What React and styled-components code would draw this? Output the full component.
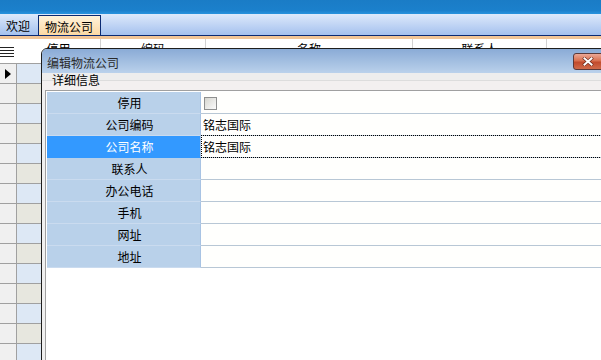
import React from 'react'
import styled, { createGlobalStyle } from 'styled-components';

const GlobalStyle = createGlobalStyle`
    html, body {
        margin: 0;
        padding: 0;
    }
    body {
        font-family: "Noto Sans CJK SC", "DejaVu Sans", sans-serif;
        font-size: 12px;
        color: #000;
        background: #fff;
        overflow: hidden;
    }
    * {
        box-sizing: border-box;
    }
`;

const columns = [
    { title: '停用', width: 84 },
    { title: '编码', width: 105 },
    { title: '名称', width: 207 },
    { title: '联系人', width: 134 },
    { title: '', width: 60 },
];

const fields = [
    { label: '停用', type: 'check' },
    { label: '公司编码', value: '铭志国际' },
    { label: '公司名称', value: '铭志国际', selected: true },
    { label: '联系人' },
    { label: '办公电话' },
    { label: '手机' },
    { label: '网址' },
    { label: '地址' },
];

function App() {
    const rows = Array.from({ length: 15 }, (_, i) => i);
    return (
        <Page>
            <GlobalStyle />
            <Banner />
            <TabStrip>
                <Tab $width={38}>欢迎</Tab>
                <Tab $width={63} $active>物流公司</Tab>
            </TabStrip>
            <PeachLine />
            <Grid>
                <HeaderRow>
                    <IndicatorHeader>
                        <svg width="14" height="12" viewBox="0 0 14 12">
                            <path d="M0 1.5h14M0 4.5h14M0 7.5h14M0 10.5h14" stroke="#222" strokeWidth="1" />
                        </svg>
                    </IndicatorHeader>
                    {columns.map((c, i) => (
                        <HeaderCell key={i} $width={c.width}>{c.title}</HeaderCell>
                    ))}
                </HeaderRow>
                {rows.map((r) => (
                    <BodyRow key={r}>
                        <IndicatorCell>
                            {r === 0 && (
                                <svg width="6" height="10" viewBox="0 0 6 10">
                                    <polygon points="0,0 6,5 0,10" fill="#000" />
                                </svg>
                            )}
                        </IndicatorCell>
                        {columns.map((c, i) => (
                            <DataCell key={i} $width={c.width} $odd={r % 2 === 1} />
                        ))}
                    </BodyRow>
                ))}
            </Grid>

            <Dialog>
                <TitleBar>
                    <Title>编辑物流公司</Title>
                    <CloseButton>
                        <svg width="12" height="9" viewBox="0 0 12 9">
                            <path d="M2.5 1.5L9.5 7.5M9.5 1.5L2.5 7.5" stroke="#6b2a1c" strokeWidth="3.2" strokeLinecap="square" />
                            <path d="M2.5 1.5L9.5 7.5M9.5 1.5L2.5 7.5" stroke="#fff" strokeWidth="2" strokeLinecap="square" />
                        </svg>
                    </CloseButton>
                </TitleBar>
                <SectionHeader>详细信息</SectionHeader>
                <Panel>
                    {fields.map((f, i) => (
                        <PropRow key={i}>
                            <PropLabel $selected={f.selected}>{f.label}</PropLabel>
                            <PropValue $focused={f.selected}>
                                {f.type === 'check' ? <CheckBox /> : f.value}
                            </PropValue>
                        </PropRow>
                    ))}
                </Panel>
            </Dialog>
        </Page>
    )
}

const Page = styled.div`
    position: relative;
    width: 601px;
    height: 360px;
    overflow: hidden;
`;

const Banner = styled.div`
    height: 14px;
    background: linear-gradient(#1a7cc6, #1b80cc 75%, #2893de);
`;

const TabStrip = styled.div`
    height: 22px;
    display: flex;
    align-items: flex-end;
    background: linear-gradient(#dde9fb, #a5c1ee);
    border-bottom: 1px solid #0b2a72;
`;

const Tab = styled.div`
    width: ${p => p.$width}px;
    height: 20px;
    display: flex;
    align-items: center;
    padding-left: 6px;
    padding-top: 1px;
    ${p => p.$active && `
        border: 1px solid #0b2a72;
        border-bottom: none;
        background: linear-gradient(#fff2da, #fcd9a4);
    `}
`;

const PeachLine = styled.div`
    height: 3px;
    background: #f2c596;
`;

const Grid = styled.div`
    display: flex;
    flex-direction: column;
`;

const HeaderRow = styled.div`
    display: flex;
    height: 25px;
    background: #fff;
    border-bottom: 1px solid #a0a0a0;
`;

const IndicatorHeader = styled.div`
    width: 17px;
    flex-shrink: 0;
    display: flex;
    align-items: center;
    justify-content: flex-start;
    padding-top: 1px;
`;

const HeaderCell = styled.div`
    width: ${p => p.$width}px;
    flex-shrink: 0;
    border-right: 1px solid #d2d2d2;
    text-align: center;
    line-height: 16px;
    padding-top: 2px;
`;

const BodyRow = styled.div`
    display: flex;
    height: 20px;
    border-bottom: 1px solid #a0a0a0;
`;

const IndicatorCell = styled.div`
    width: 17px;
    flex-shrink: 0;
    background: #f0f0f0;
    border-right: 1px solid #a0a0a0;
    display: flex;
    align-items: center;
    justify-content: center;
`;

const DataCell = styled.div`
    width: ${p => p.$width}px;
    flex-shrink: 0;
    background: ${p => (p.$odd ? '#e7e7df' : '#dde8f5')};
`;

const Dialog = styled.div`
    position: absolute;
    left: 41px;
    top: 48px;
    width: 580px;
    height: 330px;
    display: flex;
    flex-direction: column;
    border: 1px solid #1e1e1e;
    border-radius: 6px 6px 0 0;
    background: #f0f0f0;
    overflow: hidden;
`;

const TitleBar = styled.div`
    height: 24px;
    flex-shrink: 0;
    display: flex;
    align-items: center;
    padding: 0 4px 0 5px;
    background: linear-gradient(#8aabd6, #bad1eb);
    color: #2a2a2a;
`;

const Title = styled.div`
    flex: 1;
    padding-top: 2px;
`;

const CloseButton = styled.div`
    width: 43px;
    height: 17px;
    display: flex;
    align-items: center;
    justify-content: flex-start;
    padding-left: 8px;
    border: 1px solid #5b3a3a;
    border-radius: 3px;
    background: linear-gradient(#eca896, #d8704f 45%, #c24b2d 55%, #d06b4a);
`;

const SectionHeader = styled.div`
    height: 17px;
    flex-shrink: 0;
    padding-left: 10px;
    line-height: 14px;
    background: linear-gradient(#ededed 0 7px, #dddddd 7px 8px, #f3f0f0 8px);
`;

const Panel = styled.div`
    flex: 1;
    margin-left: 3px;
    padding: 1px 0 0 1px;
    background: #fff;
    border-top: 1px solid #a0a0a0;
    border-left: 1px solid #a0a0a0;
`;

const PropRow = styled.div`
    display: flex;
    height: 22px;
`;

const PropLabel = styled.div`
    width: 154px;
    flex-shrink: 0;
    display: flex;
    align-items: center;
    justify-content: center;
    padding-left: 12px;
    background: ${p => (p.$selected ? '#3399ff' : '#b9d1ea')};
    color: ${p => (p.$selected ? '#fff' : '#000')};
    border-right: 1px solid #a8c3e3;
    border-bottom: 1px solid ${p => (p.$selected ? '#3399ff' : '#cadbef')};
`;

const PropValue = styled.div`
    position: relative;
    flex: 1;
    display: flex;
    align-items: center;
    padding-left: 2px;
    background: #fffffd;
    border-bottom: 1px solid #b8c7d5;
    ${p => p.$focused && `
        &::after {
            content: '';
            position: absolute;
            left: 0;
            right: 0;
            top: -1px;
            bottom: -1px;
            border: 1px dotted #000;
            border-right: none;
        }
    `}
`;

const CheckBox = styled.span`
    width: 13px;
    height: 13px;
    margin-left: 1px;
    margin-top: 1px;
    border: 1px solid #8e8f8f;
    background: linear-gradient(135deg, #d6d6d0, #fbfbfb);
`;

export default App;
